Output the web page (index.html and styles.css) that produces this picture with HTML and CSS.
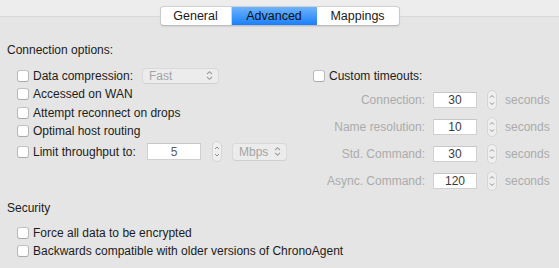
FILE: index.html
```html
<!DOCTYPE html>
<html>
<head>
<meta charset="utf-8">
<link rel="stylesheet" href="styles.css">
</head>
<body>
<div class="header">
  <div class="tabs">
    <div class="tab t-general">General</div>
    <div class="tab t-adv active">Advanced</div>
    <div class="tab t-map">Mappings</div>
  </div>
</div>

<div class="section-title">Connection options:</div>
<div class="cols">
  <div class="left">
    <div class="row h19"><span class="cb"></span><span class="lbl w-data">Data compression:</span>
      <div class="popup p-fast"><span>Fast</span>
        <svg class="pchev" width="7" height="11" viewBox="0 0 7 11"><path d="M1 4.2 L3.5 1.7 L6 4.2 M1 6.8 L3.5 9.3 L6 6.8" fill="none" stroke="#9a9a9a" stroke-width="1.1"/></svg>
      </div>
    </div>
    <div class="row h18"><span class="cb"></span><span class="lbl">Accessed on WAN</span></div>
    <div class="row h19"><span class="cb"></span><span class="lbl">Attempt reconnect on drops</span></div>
    <div class="row h18"><span class="cb"></span><span class="lbl">Optimal host routing</span></div>
    <div class="row h23"><span class="cb"></span><span class="lbl w-limit">Limit throughput to:</span>
      <div class="field f-wide">5</div>
      <div class="stepper s-left">
        <svg width="10" height="21" viewBox="0 0 10 21"><path d="M3 8 L5 6 L7 8 M3 13 L5 15 L7 13" fill="none" stroke="#8e8e8e" stroke-width="1"/></svg>
      </div>
      <div class="popup p-mbps"><span>Mbps</span>
        <svg class="pchev" width="7" height="11" viewBox="0 0 7 11"><path d="M1 4.2 L3.5 1.7 L6 4.2 M1 6.8 L3.5 9.3 L6 6.8" fill="none" stroke="#9a9a9a" stroke-width="1.1"/></svg>
      </div>
    </div>
  </div>
  <div class="right">
    <div class="row h19"><span class="cb"></span><span class="lbl">Custom timeouts:</span></div>
    <div class="tgrid">
      <div class="trow"><span class="tlabel">Connection:</span><div class="field f-small">30</div><div class="stepper s-right"><svg width="10" height="20" viewBox="0 0 10 20"><path d="M3 7.5 L5 5.5 L7 7.5 M3 12.5 L5 14.5 L7 12.5" fill="none" stroke="#8e8e8e" stroke-width="1"/></svg></div><span class="secs">seconds</span></div>
      <div class="trow"><span class="tlabel">Name resolution:</span><div class="field f-small">10</div><div class="stepper s-right"><svg width="10" height="20" viewBox="0 0 10 20"><path d="M3 7.5 L5 5.5 L7 7.5 M3 12.5 L5 14.5 L7 12.5" fill="none" stroke="#8e8e8e" stroke-width="1"/></svg></div><span class="secs">seconds</span></div>
      <div class="trow"><span class="tlabel">Std. Command:</span><div class="field f-small">30</div><div class="stepper s-right"><svg width="10" height="20" viewBox="0 0 10 20"><path d="M3 7.5 L5 5.5 L7 7.5 M3 12.5 L5 14.5 L7 12.5" fill="none" stroke="#8e8e8e" stroke-width="1"/></svg></div><span class="secs">seconds</span></div>
      <div class="trow"><span class="tlabel">Async. Command:</span><div class="field f-small">120</div><div class="stepper s-right"><svg width="10" height="20" viewBox="0 0 10 20"><path d="M3 7.5 L5 5.5 L7 7.5 M3 12.5 L5 14.5 L7 12.5" fill="none" stroke="#8e8e8e" stroke-width="1"/></svg></div><span class="secs">seconds</span></div>
    </div>
  </div>
</div>

<div class="section-title sec">Security</div>
<div class="sec-rows">
  <div class="row h18"><span class="cb"></span><span class="lbl">Force all data to be encrypted</span></div>
  <div class="row h18"><span class="cb"></span><span class="lbl">Backwards compatible with older versions of ChronoAgent</span></div>
</div>
</body>
</html>
```

FILE: styles.css
```css
html, body {
  margin: 0;
  padding: 0;
}
body {
  width: 559px;
  height: 268px;
  overflow: hidden;
  background: #e5e5e5;
  font-family: "Liberation Sans", Arial, sans-serif;
  font-size: 12px;
  color: #1c1c1c;
}
.header {
  height: 26px;
  box-sizing: border-box;
  padding-top: 6px;
  display: flex;
  justify-content: center;
  background: linear-gradient(#ededed 0, #ededed 16px, #d9d9d9 16px, #d9d9d9 17px, #e5e5e5 17px);
}
.tabs {
  display: flex;
  height: 20px;
  box-sizing: border-box;
  border: 1px solid #c9c9c9;
  border-top-color: #d2d2d2;
  border-bottom-color: #bdbdbd;
  border-radius: 4px;
  background: #fff;
  overflow: hidden;
  box-shadow: 0 0.5px 1px rgba(0,0,0,0.08);
  font-size: 12.5px;
}
.tab {
  display: flex;
  align-items: center;
  justify-content: center;
  height: 18px;
  line-height: 18px;
  color: #1a1a1a;
}
.t-general { width: 70px; border-right: 1px solid #d4d4d4; }
.t-adv { width: 85px; }
.t-map { width: 82px; }
.tab.active {
  background: linear-gradient(#6db3fb, #1a80fb);
  color: #111;
}
.section-title {
  height: 16px;
  line-height: 16px;
  padding-left: 7px;
  margin-top: 16px;
}
.cols {
  display: flex;
  margin-top: 8px;
}
.left {
  width: 313px;
  box-sizing: border-box;
  padding-left: 17px;
}
.right {
  flex: 1;
}
.row {
  display: flex;
  align-items: center;
}
.h18 { height: 18px; }
.h19 { height: 19px; }
.h23 { height: 23px; }
.cb {
  width: 12px;
  height: 12px;
  box-sizing: border-box;
  border: 1px solid #b8b8b8;
  border-top-color: #c2c2c2;
  border-bottom-color: #a9a9a9;
  border-radius: 3px;
  background: #fff;
  margin-right: 4px;
  flex: none;
}
.lbl {
  white-space: nowrap;
}
.w-data { width: 109px; }
.w-limit { width: 114px; }
.popup {
  display: flex;
  align-items: center;
  justify-content: space-between;
  box-sizing: border-box;
  height: 16px;
  padding: 0 5px 0 6px;
  background: #ececec;
  border: 1px solid #d9d9d9;
  border-bottom-color: #d0d0d0;
  border-radius: 4px;
  color: #a4a4a4;
}
.p-fast { width: 77px; }
.p-mbps { width: 55px; height: 18px; margin-left: 10px; }
.pchev { display: block; }
.field {
  box-sizing: border-box;
  background: #fff;
  border: 1px solid #d0d0d0;
  border-top-color: #c6c6c6;
  display: flex;
  align-items: center;
  justify-content: center;
  color: #3a3a3a;
}
.f-wide { width: 54px; height: 17px; color: #5c5c5c; }
.f-small { width: 44px; height: 16px; }
.stepper {
  box-sizing: border-box;
  width: 10px;
  border: 1px solid #d6d6d6;
  border-radius: 5px;
  background: #efefef;
  display: flex;
  align-items: center;
  justify-content: center;
  overflow: hidden;
}
.stepper svg { display: block; flex: none; }
.s-left { height: 21px; margin-left: 11px; }
.s-right { height: 20px; margin-left: 10px; }
.tgrid {
  margin-top: 1px;
}
.trow {
  display: flex;
  align-items: center;
  height: 27px;
}
.tlabel {
  width: 112px;
  text-align: right;
  color: #ababab;
  margin-right: 8px;
  white-space: nowrap;
}
.secs {
  color: #ababab;
  margin-left: 8px;
}
.section-title.sec {
  margin-top: 6px;
}
.sec-rows {
  margin-top: 8px;
  padding-left: 17px;
}
```
